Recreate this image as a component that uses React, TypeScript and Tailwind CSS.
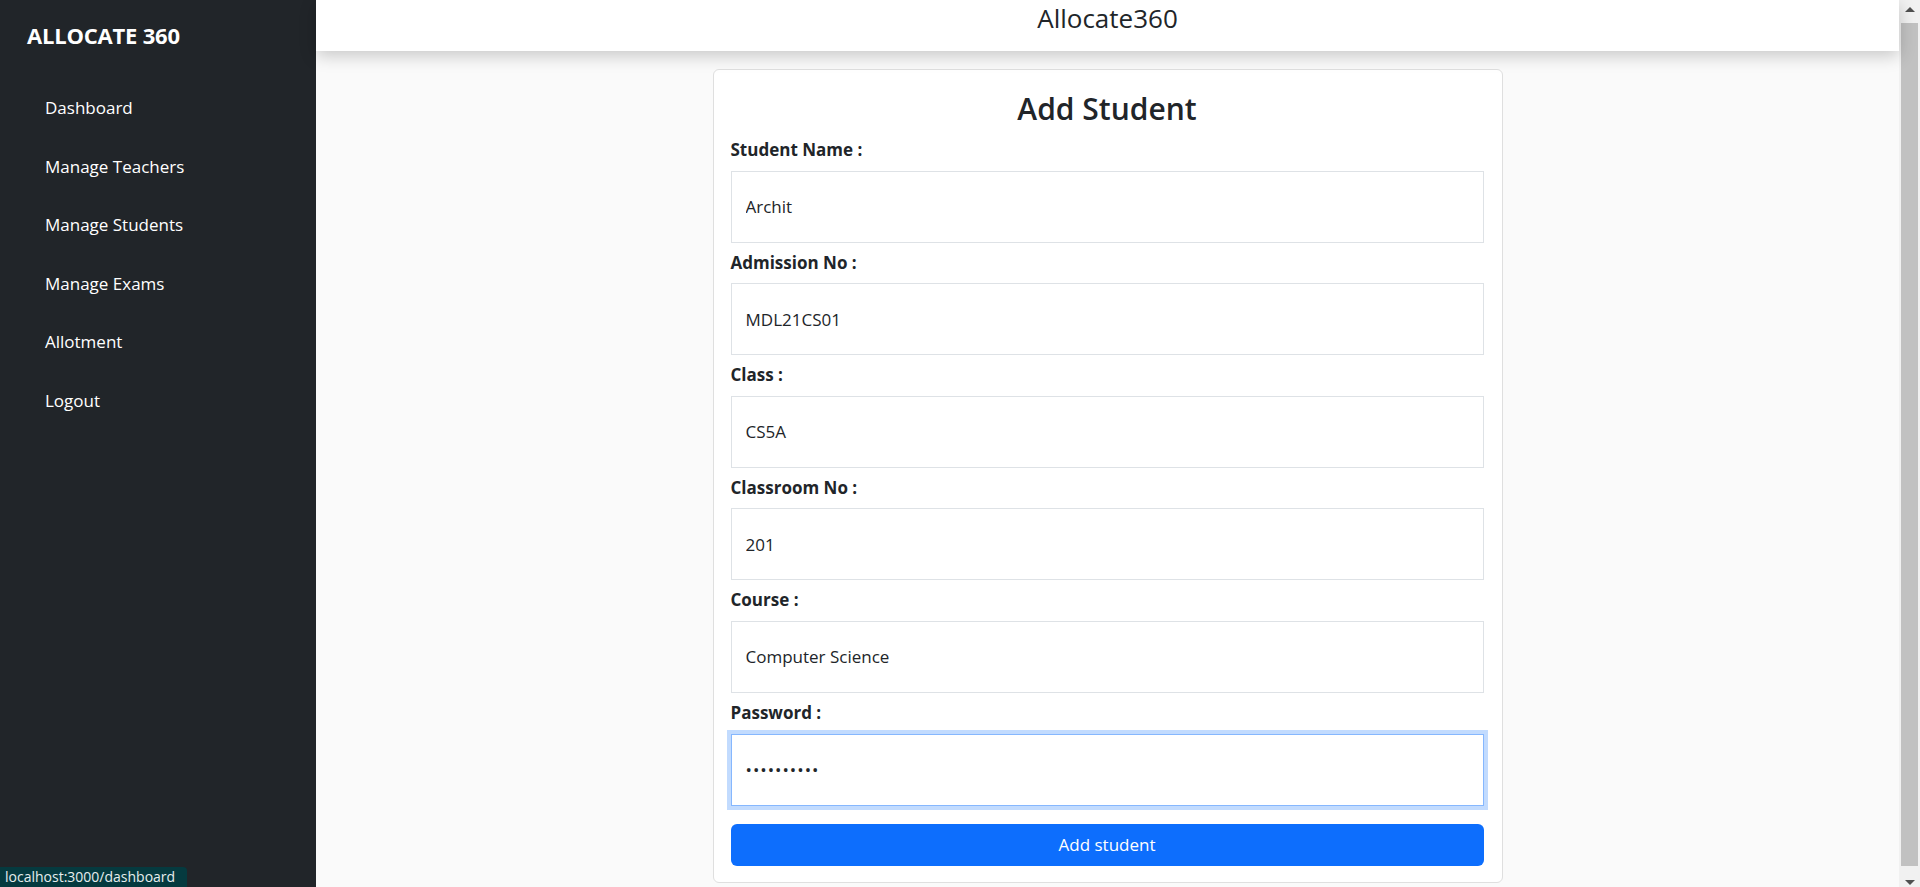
import React from "react";

const navItems = ["Dashboard", "Manage Teachers", "Manage Students", "Manage Exams", "Allotment", "Logout"];

const fields: { label: string; value: string; type?: string; focused?: boolean }[] = [
  { label: "Student Name :", value: "Archit" },
  { label: "Admission No :", value: "MDL21CS01" },
  { label: "Class :", value: "CS5A" },
  { label: "Classroom No :", value: "201" },
  { label: "Course :", value: "Computer Science" },
  { label: "Password :", value: "archit1234", type: "password", focused: true },
];

export default function App() {
  return (
    <div className="relative flex h-[887px] w-[1920px] overflow-hidden bg-[#fafafa] font-['Open_Sans','Noto_Sans',sans-serif] text-[#212529]">
      {/* Sidebar */}
      <aside className="flex w-[316px] shrink-0 flex-col bg-[#212529] text-white">
        <div className="h-[79px] pl-[27px] pt-[22px]">
          <div className="text-[22px] font-bold leading-[26px] tracking-[-0.2px]">ALLOCATE 360</div>
        </div>
        <nav className="flex flex-col">
          {navItems.map((item) => (
            <a key={item} href="#" className="flex h-[58.5px] items-center pl-[45px] text-[17px] leading-[24px] text-white">
              {item}
            </a>
          ))}
        </nav>
      </aside>

      {/* Main */}
      <main className="flex min-w-0 flex-1 flex-col">
        <header className="relative z-10 flex h-[51px] shrink-0 items-start justify-center bg-white shadow-[0_5px_16px_rgba(0,0,0,0.2)]">
          <h1 className="text-[26px] leading-[36px]">Allocate360</h1>
        </header>
        <div className="flex flex-1 justify-center pt-[18px]">
          <div className="h-[814px] w-[790px] rounded-[6px] border border-[#dfdfdf] bg-white pb-4 pl-[17px] pr-[18px] pt-4">
            <h2 className="h-[44px] pt-[4px] text-center text-[30px] font-semibold leading-[38px]">Add Student</h2>
            <form className="flex flex-col">
              {fields.map((f) => (
                <div key={f.label} className="flex flex-col">
                  <label className="pb-[8.6px] pt-2 text-[17px] font-bold leading-6">{f.label}</label>
                  <input
                    readOnly
                    type={f.type ?? "text"}
                    value={f.value}
                    className={
                      f.focused
                        ? "h-[72px] w-full rounded-none border border-[#86b7fe] bg-white px-[14px] text-[17px] tracking-[1px] text-[#212529] shadow-[0_0_0_4px_rgba(13,110,253,0.25)] outline-none"
                        : "h-[72px] w-full rounded-none border border-[#dee2e6] bg-white px-[14px] text-[17px] text-[#212529] outline-none"
                    }
                  />
                </div>
              ))}
              <button type="button" className="mt-[18px] h-[42px] w-full rounded-[6px] bg-[#0d6efd] text-[17px] text-white">
                Add student
              </button>
            </form>
          </div>
        </div>
      </main>

      {/* Scrollbar */}
      <div className="flex w-[21px] shrink-0 flex-col bg-[#f1f1f1]">
        <div className="flex h-[23px] justify-center pt-[7px]">
          <svg width="10" height="5" viewBox="0 0 10 5">
            <path d="M0 5 L5 0 L10 5 Z" fill="#505050" />
          </svg>
        </div>
        <div className="mx-[2px] flex-1 bg-[#c1c1c1]" />
        <div className="flex h-[21px] justify-center pt-[14px]">
          <svg width="10" height="5" viewBox="0 0 10 5">
            <path d="M0 0 L10 0 L5 5 Z" fill="#505050" />
          </svg>
        </div>
      </div>

      {/* Browser status bubble */}
      <div className="absolute bottom-0 left-0 flex h-[20px] w-[187px] items-center rounded-tr-[4px] bg-[#053a3f] pl-[5px] text-[14px] leading-[20px] text-[#e6eeee]">
        localhost:3000/dashboard
      </div>
    </div>
  );
}
